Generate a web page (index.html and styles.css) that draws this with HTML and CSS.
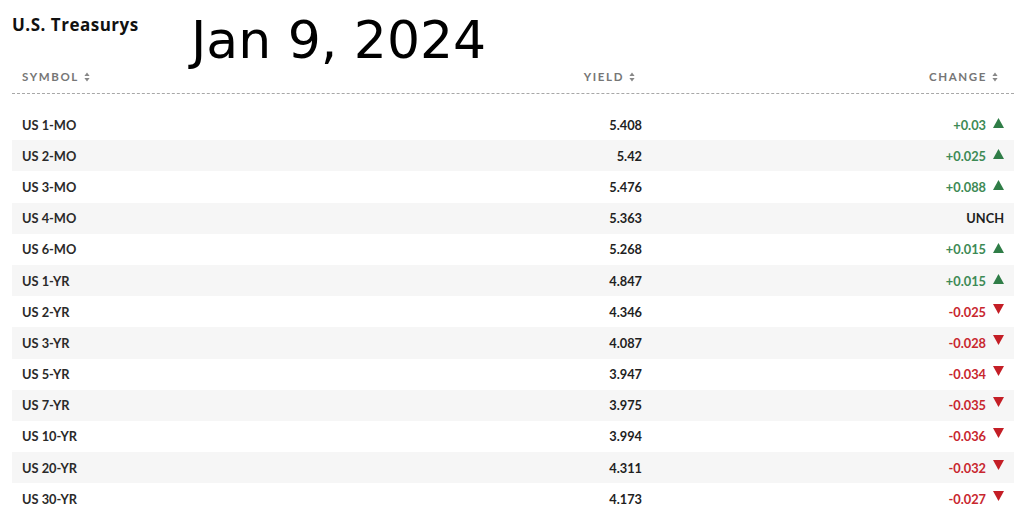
FILE: index.html
```html
<!DOCTYPE html>
<html lang="en">
<head>
<meta charset="utf-8">
<title>U.S. Treasurys</title>
<link rel="stylesheet" href="styles.css">
</head>
<body>
<div class="page">
  <div class="top">
    <h1 class="title">U.S. Treasurys</h1>
    <div class="date">Jan 9, 2024</div>
  </div>
  <div class="table">
    <div class="thead">
      <div class="th th-sym">SYMBOL <svg class="sort" viewBox="0 0 6 10" width="6" height="10"><path d="M3 0.5 L5.6 4 L0.4 4 Z M3 9.5 L5.6 6 L0.4 6 Z" fill="#888"/></svg></div>
      <div class="th th-num">YIELD <svg class="sort" viewBox="0 0 6 10" width="6" height="10"><path d="M3 0.5 L5.6 4 L0.4 4 Z M3 9.5 L5.6 6 L0.4 6 Z" fill="#888"/></svg></div>
      <div class="th th-chg">CHANGE <svg class="sort" viewBox="0 0 6 10" width="6" height="10"><path d="M3 0.5 L5.6 4 L0.4 4 Z M3 9.5 L5.6 6 L0.4 6 Z" fill="#888"/></svg></div>
    </div>
    <div class="tbody">
      <div class="row"><span class="sym">US 1-MO</span><span class="yld">5.408</span><span class="chg up">+0.03 <svg class="tri" viewBox="0 0 11 10" width="11" height="10"><path d="M5.5 0 L11 10 L0 10 Z"/></svg></span></div>
      <div class="row"><span class="sym">US 2-MO</span><span class="yld">5.42</span><span class="chg up">+0.025 <svg class="tri" viewBox="0 0 11 10" width="11" height="10"><path d="M5.5 0 L11 10 L0 10 Z"/></svg></span></div>
      <div class="row"><span class="sym">US 3-MO</span><span class="yld">5.476</span><span class="chg up">+0.088 <svg class="tri" viewBox="0 0 11 10" width="11" height="10"><path d="M5.5 0 L11 10 L0 10 Z"/></svg></span></div>
      <div class="row"><span class="sym">US 4-MO</span><span class="yld">5.363</span><span class="chg unch">UNCH</span></div>
      <div class="row"><span class="sym">US 6-MO</span><span class="yld">5.268</span><span class="chg up">+0.015 <svg class="tri" viewBox="0 0 11 10" width="11" height="10"><path d="M5.5 0 L11 10 L0 10 Z"/></svg></span></div>
      <div class="row"><span class="sym">US 1-YR</span><span class="yld">4.847</span><span class="chg up">+0.015 <svg class="tri" viewBox="0 0 11 10" width="11" height="10"><path d="M5.5 0 L11 10 L0 10 Z"/></svg></span></div>
      <div class="row"><span class="sym">US 2-YR</span><span class="yld">4.346</span><span class="chg down">-0.025 <svg class="tri" viewBox="0 0 11 10" width="11" height="10"><path d="M0 0 L11 0 L5.5 10 Z"/></svg></span></div>
      <div class="row"><span class="sym">US 3-YR</span><span class="yld">4.087</span><span class="chg down">-0.028 <svg class="tri" viewBox="0 0 11 10" width="11" height="10"><path d="M0 0 L11 0 L5.5 10 Z"/></svg></span></div>
      <div class="row"><span class="sym">US 5-YR</span><span class="yld">3.947</span><span class="chg down">-0.034 <svg class="tri" viewBox="0 0 11 10" width="11" height="10"><path d="M0 0 L11 0 L5.5 10 Z"/></svg></span></div>
      <div class="row"><span class="sym">US 7-YR</span><span class="yld">3.975</span><span class="chg down">-0.035 <svg class="tri" viewBox="0 0 11 10" width="11" height="10"><path d="M0 0 L11 0 L5.5 10 Z"/></svg></span></div>
      <div class="row"><span class="sym">US 10-YR</span><span class="yld">3.994</span><span class="chg down">-0.036 <svg class="tri" viewBox="0 0 11 10" width="11" height="10"><path d="M0 0 L11 0 L5.5 10 Z"/></svg></span></div>
      <div class="row"><span class="sym">US 20-YR</span><span class="yld">4.311</span><span class="chg down">-0.032 <svg class="tri" viewBox="0 0 11 10" width="11" height="10"><path d="M0 0 L11 0 L5.5 10 Z"/></svg></span></div>
      <div class="row"><span class="sym">US 30-YR</span><span class="yld">4.173</span><span class="chg down">-0.027 <svg class="tri" viewBox="0 0 11 10" width="11" height="10"><path d="M0 0 L11 0 L5.5 10 Z"/></svg></span></div>
    </div>
  </div>
</div>
</body>
</html>
```

FILE: styles.css
```css
* { box-sizing: border-box; }
html, body { margin: 0; padding: 0; background: #fff; }
body {
  font-family: Lato, "Open Sans", Arial, sans-serif;
  color: #1f1f1f;
}
.page {
  width: 1024px;
  height: 527px;
  padding: 0 10px 0 12px;
  overflow: hidden;
}
.top {
  display: flex;
  align-items: flex-start;
  height: 60px;
}
.title {
  margin: 15px 0 0 0;
  font-family: "Open Sans", Lato, sans-serif;
  font-size: 17px;
  line-height: 20px;
  letter-spacing: 0.5px;
  font-weight: 700;
  color: #111;
  width: 179px;
}
.date {
  margin-top: 10px;
  font-family: "DejaVu Sans", sans-serif;
  font-size: 52px;
  line-height: 60px;
  color: #000;
}
.thead {
  display: grid;
  grid-template-columns: 520px 100px 1fr;
  align-items: center;
  height: 34px;
  padding: 0 10px;
  border-bottom: 1px dashed #a8a8a8;
}
.th {
  font-size: 11.5px;
  font-weight: 700;
  letter-spacing: 1.6px;
  color: #767676;
  display: flex;
  align-items: center;
  gap: 5px;
}
.th-num { justify-content: flex-end; padding-right: 7px; }
.th-chg { justify-content: flex-end; padding-right: 6px; }
.sort { display: block; }
.tbody { margin-top: 15px; }
.row {
  display: grid;
  grid-template-columns: 520px 100px 1fr;
  align-items: center;
  height: 31.2px;
  padding: 0 10px;
  font-size: 12.8px;
  font-weight: 700;
}
.row:nth-child(even) { background: #f6f6f6; }
.sym { color: #2a2a2a; }
.yld { text-align: right; color: #1f1f1f; }
.chg {
  display: flex;
  justify-content: flex-end;
  align-items: center;
  gap: 7px;
}
.chg.up { color: #3d8a55; }
.chg.up .tri { fill: #2f7d47; margin-top: -3px; }
.chg.down { color: #c8262e; }
.chg.down .tri { fill: #c41e26; margin-top: -6px; }
.chg.unch { color: #1f1f1f; }
.tri { display: block; }
```
